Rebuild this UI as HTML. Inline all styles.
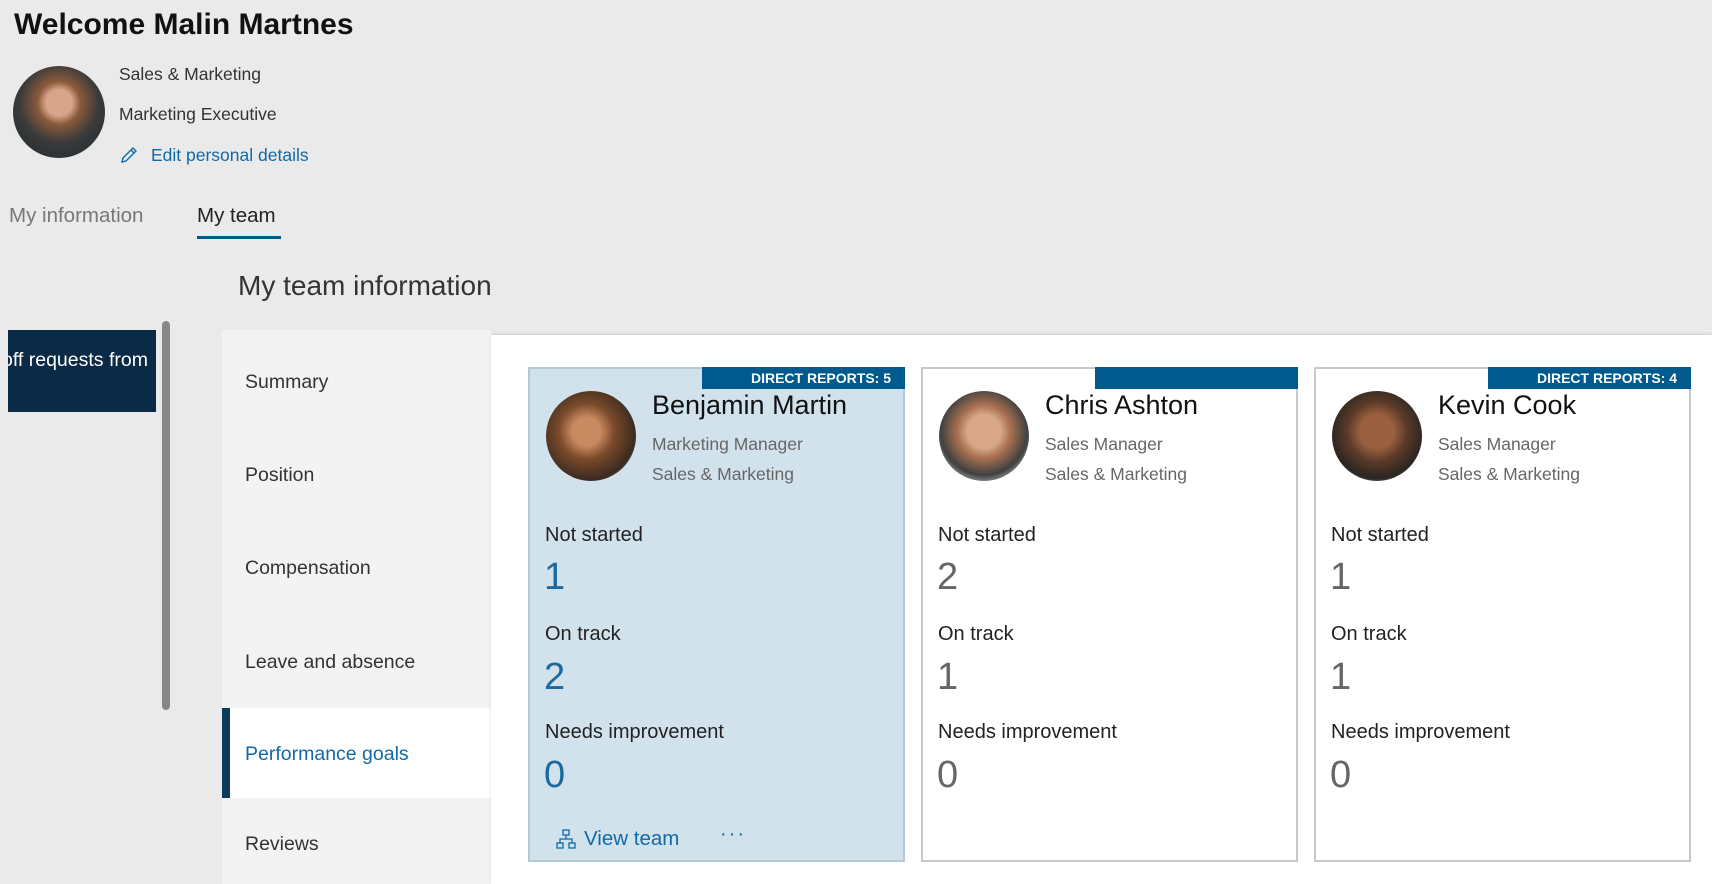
<!DOCTYPE html>
<html><head><meta charset="utf-8"><style>
*{margin:0;padding:0;box-sizing:border-box}
body{width:1712px;height:884px;overflow:hidden;background:#eaeaea;font-family:"Liberation Sans",sans-serif;position:relative;color:#222}
.a{position:absolute;white-space:nowrap;line-height:30px}
.av{position:absolute;border-radius:50%;overflow:hidden}
.card{position:absolute;top:367px;width:377px;height:495px;border:2px solid #c8c8c8;background:#fff}
.card.sel{background:#d1e2ed;border-color:#b5c8d6}
.ban{position:absolute;top:-2px;right:-2px;width:203px;height:22px;background:#005a8e;color:#fff;font-weight:bold;font-size:14px;line-height:22px;text-align:right;padding-right:14px}
.nm{font-size:27px;color:#111}
.sub{font-size:17.5px;color:#666}
.lb{font-size:20px;color:#222}
.num{font-size:38px;color:#666;font-weight:300;line-height:44px}
.sel .num{color:#1a6aa0}
.nav{font-size:19.5px;color:#333}
</style></head><body>
<div class="a" style="left:14px;top:8px;font-size:30px;font-weight:bold;color:#111;line-height:34px">Welcome Malin Martnes</div>
<div class="av" style="left:13px;top:66px;width:92px;height:92px;background:radial-gradient(circle at 50% 40%,#d9a58a 0 18%,#8a5a3a 30%,#3a3a3a 55%,#1e2a30 100%)"></div>
<div class="a" style="left:119px;top:59px;font-size:17.5px;color:#333">Sales &amp; Marketing</div>
<div class="a" style="left:119px;top:99px;font-size:17.5px;color:#333">Marketing Executive</div>
<svg class="a" style="left:119px;top:145px" width="20" height="20" viewBox="0 0 20 20"><path d="M3 17l1-4L14 3l3 3L7 16z M12 5l3 3" fill="none" stroke="#0f6aa8" stroke-width="1.4"/></svg>
<div class="a" style="left:151px;top:140px;font-size:17.5px;color:#0f6aa8">Edit personal details</div>
<div class="a" style="left:9px;top:201px;font-size:20.5px;color:#777">My information</div>
<div class="a" style="left:197px;top:201px;font-size:20.5px;color:#222">My team</div>
<div class="a" style="left:197px;top:236px;width:84px;height:3px;background:#005a8e"></div>
<div class="a" style="left:238px;top:269px;font-size:28px;color:#333;line-height:34px">My team information</div>
<div class="a" style="left:8px;top:330px;width:148px;height:82px;background:#0a2a45;overflow:hidden"><div style="position:absolute;left:-6px;top:15px;color:#fff;font-size:19.5px;line-height:30px">off requests from</div></div>
<div class="a" style="left:162px;top:321px;width:8px;height:389px;background:#888;border-radius:4px"></div>
<div class="a" style="left:222px;top:330px;width:269px;height:554px;background:#f3f3f3"></div>
<div class="a" style="left:222px;top:708px;width:269px;height:90px;background:#fff"></div>
<div class="a" style="left:222px;top:708px;width:8px;height:90px;background:#0a3a5c"></div>
<div class="a nav" style="left:245px;top:367px">Summary</div>
<div class="a nav" style="left:245px;top:460px">Position</div>
<div class="a nav" style="left:245px;top:553px">Compensation</div>
<div class="a nav" style="left:245px;top:647px">Leave and absence</div>
<div class="a nav" style="left:245px;top:739px;color:#0f6aa8">Performance goals</div>
<div class="a nav" style="left:245px;top:829px">Reviews</div>
<div class="a" style="left:491px;top:335px;width:1221px;height:549px;background:#fff;box-shadow:0 -1px 3px rgba(0,0,0,.12)"></div>

<div class="card sel" style="left:528px">
<div class="ban">DIRECT REPORTS: 5</div>
<div class="av" style="left:16px;top:22px;width:90px;height:90px;background:radial-gradient(circle at 45% 45%,#c88a60 0 20%,#7a4a2a 40%,#3a2a20 70%,#c0c8d0 100%)"></div>
<div class="a nm" style="left:122px;top:21px">Benjamin Martin</div>
<div class="a sub" style="left:122px;top:60px">Marketing Manager</div>
<div class="a sub" style="left:122px;top:90px">Sales &amp; Marketing</div>
<div class="a lb" style="left:15px;top:151px">Not started</div>
<div class="a num" style="left:14px;top:186px">1</div>
<div class="a lb" style="left:15px;top:250px">On track</div>
<div class="a num" style="left:14px;top:286px">2</div>
<div class="a lb" style="left:15px;top:348px">Needs improvement</div>
<div class="a num" style="left:14px;top:384px">0</div>
<svg class="a" style="left:25px;top:459px" width="22" height="22" viewBox="0 0 22 22" fill="none" stroke="#0f6aa8" stroke-width="1.3"><rect x="8" y="2" width="6" height="5"/><rect x="2" y="15" width="6" height="5"/><rect x="14" y="15" width="6" height="5"/><path d="M11 7v4M5 15v-4h12v4"/></svg>
<div class="a" style="left:54px;top:455px;font-size:20.5px;color:#0f6aa8">View team</div>
<div class="a" style="left:190px;top:450px;font-size:20px;color:#0f6aa8;letter-spacing:2px">···</div>
</div>

<div class="card" style="left:921px">
<div class="ban"></div>
<div class="av" style="left:16px;top:22px;width:90px;height:90px;background:radial-gradient(circle at 50% 45%,#d8a888 0 25%,#a87050 40%,#404040 65%,#e0e4e6 90%)"></div>
<div class="a nm" style="left:122px;top:21px">Chris Ashton</div>
<div class="a sub" style="left:122px;top:60px">Sales Manager</div>
<div class="a sub" style="left:122px;top:90px">Sales &amp; Marketing</div>
<div class="a lb" style="left:15px;top:151px">Not started</div>
<div class="a num" style="left:14px;top:186px">2</div>
<div class="a lb" style="left:15px;top:250px">On track</div>
<div class="a num" style="left:14px;top:286px">1</div>
<div class="a lb" style="left:15px;top:348px">Needs improvement</div>
<div class="a num" style="left:14px;top:384px">0</div>
</div>

<div class="card" style="left:1314px">
<div class="ban">DIRECT REPORTS: 4</div>
<div class="av" style="left:16px;top:22px;width:90px;height:90px;background:radial-gradient(circle at 50% 45%,#9a6040 0 25%,#5a3a28 45%,#2a2520 70%,#d8d0c8 95%)"></div>
<div class="a nm" style="left:122px;top:21px">Kevin Cook</div>
<div class="a sub" style="left:122px;top:60px">Sales Manager</div>
<div class="a sub" style="left:122px;top:90px">Sales &amp; Marketing</div>
<div class="a lb" style="left:15px;top:151px">Not started</div>
<div class="a num" style="left:14px;top:186px">1</div>
<div class="a lb" style="left:15px;top:250px">On track</div>
<div class="a num" style="left:14px;top:286px">1</div>
<div class="a lb" style="left:15px;top:348px">Needs improvement</div>
<div class="a num" style="left:14px;top:384px">0</div>
</div>
</body></html>
